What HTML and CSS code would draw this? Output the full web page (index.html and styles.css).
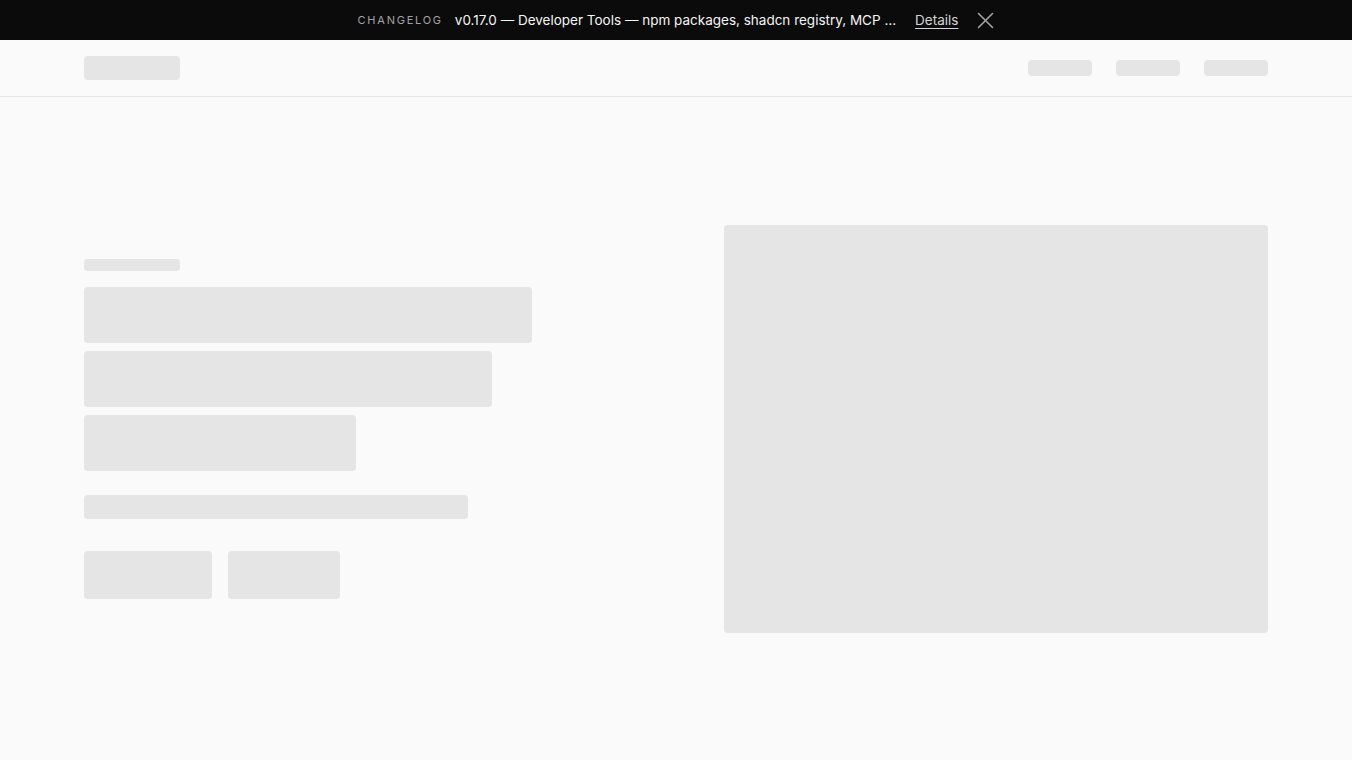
FILE: index.html
```html
<!DOCTYPE html>
<html lang="en">
<head>
    <meta charset="UTF-8">
    <meta name="viewport" content="width=device-width, initial-scale=1.0">
    <title>Loading</title>
    <link rel="stylesheet" href="styles.css">
</head>
<body>
    <div class="banner">
        <span class="banner-label">CHANGELOG</span>
        <span class="banner-text">v0.17.0 — Developer Tools — npm packages, shadcn registry, MCP …</span>
        <a class="banner-link" href="#">Details</a>
        <button class="banner-close" aria-label="Close">
            <svg width="17" height="17" viewBox="0 0 17 17" fill="none" stroke="currentColor" stroke-width="1.6" stroke-linecap="round">
                <path d="M1.5 1.5L15.5 15.5M15.5 1.5L1.5 15.5"/>
            </svg>
        </button>
    </div>

    <header class="header">
        <div class="container header-inner">
            <div class="skel skel-logo"></div>
            <nav class="nav">
                <div class="skel skel-nav"></div>
                <div class="skel skel-nav"></div>
                <div class="skel skel-nav"></div>
            </nav>
        </div>
    </header>

    <main class="hero">
        <div class="container hero-grid">
            <div class="hero-copy">
                <div class="skel skel-eyebrow"></div>
                <div class="title-lines">
                    <div class="skel skel-title w1"></div>
                    <div class="skel skel-title w2"></div>
                    <div class="skel skel-title w3"></div>
                </div>
                <div class="skel skel-sub"></div>
                <div class="actions">
                    <div class="skel skel-btn primary"></div>
                    <div class="skel skel-btn secondary"></div>
                </div>
            </div>
            <div class="skel skel-media"></div>
        </div>
    </main>
</body>
</html>
```

FILE: styles.css
```css
* {
    box-sizing: border-box;
}

body {
    margin: 0;
    background-color: #fafafa;
    font-family: 'Inter', 'Noto Sans', sans-serif;
}

.container {
    width: 1184px;
    margin: 0 auto;
}

/* changelog banner */
.banner {
    height: 40px;
    background-color: #0b0b0b;
    display: flex;
    justify-content: center;
    align-items: center;
    gap: 12px;
    color: #f5f5f5;
    font-size: 13.5px;
}

.banner-label {
    font-size: 11px;
    letter-spacing: 0.16em;
    color: #a3a3a3;
}

.banner-text {
    white-space: nowrap;
    margin-right: 7px;
}

.banner-link {
    color: #d4d4d4;
    text-decoration: underline;
    text-underline-offset: 3px;
    margin-right: 7px;
}

.banner-close {
    background: none;
    border: none;
    padding: 0;
    color: #a3a3a3;
    display: flex;
    cursor: pointer;
}

/* header */
.header {
    height: 57px;
    border-bottom: 1px solid #e5e5e5;
}

.header-inner {
    height: 56px;
    display: flex;
    justify-content: space-between;
    align-items: center;
}

.nav {
    display: flex;
    gap: 24px;
}

/* skeletons */
.skel {
    background-color: #e5e5e5;
    border-radius: 4px;
}

.skel-logo {
    width: 96px;
    height: 24px;
}

.skel-nav {
    width: 64px;
    height: 16px;
}

.hero {
    padding: 128px 0;
}

.hero-grid {
    display: grid;
    grid-template-columns: 544px 544px;
    column-gap: 96px;
    align-items: center;
}

.skel-eyebrow {
    width: 96px;
    height: 12px;
    margin-bottom: 16px;
}

.title-lines {
    display: flex;
    flex-direction: column;
    gap: 8px;
    margin-bottom: 24px;
}

.skel-title {
    height: 56px;
}

.skel-title.w1 { width: 448px; }
.skel-title.w2 { width: 408px; }
.skel-title.w3 { width: 272px; }

.skel-sub {
    width: 384px;
    height: 24px;
    margin-bottom: 32px;
}

.actions {
    display: flex;
    gap: 16px;
}

.skel-btn {
    height: 48px;
}

.skel-btn.primary { width: 128px; }
.skel-btn.secondary { width: 112px; }

.skel-media {
    height: 408px;
}
```
